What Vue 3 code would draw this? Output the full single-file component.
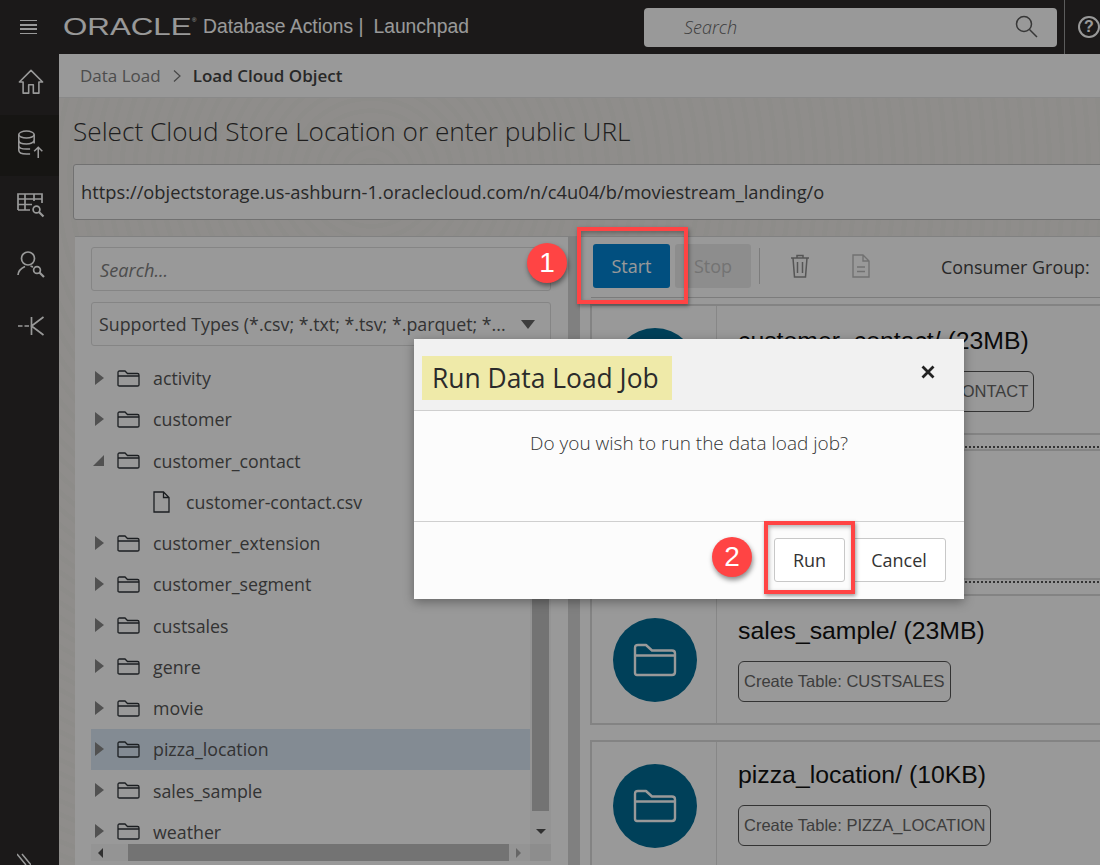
<script setup>
// Tree items on the left side of the load page
const folders = [
  { name: 'activity' },
  { name: 'customer' },
  { name: 'customer_contact', open: true },
  { name: 'customer-contact.csv', file: true },
  { name: 'customer_extension' },
  { name: 'customer_segment' },
  { name: 'custsales' },
  { name: 'genre' },
  { name: 'movie' },
  { name: 'pizza_location', selected: true },
  { name: 'sales_sample' },
  { name: 'weather' }
]

// Cards on the right, the second one sits fully behind the dialog
const cards = [
  { title: 'customer_contact/ (23MB)', tag: 'Create Table: CUSTOMER_CONTACT', cls: 'first' },
  { title: '', tag: '', cls: 'second' },
  { title: 'sales_sample/ (23MB)', tag: 'Create Table: CUSTSALES', cls: 'third' },
  { title: 'pizza_location/ (10KB)', tag: 'Create Table: PIZZA_LOCATION', cls: 'fourth' }
]
</script>

<template>
  <div class="page">
    <header class="topbar">
      <div class="burger"><i></i><i></i><i></i><i></i></div>
      <span class="logo">ORACLE</span>
      <span class="logo-mark">®</span>
      <span class="app-name">Database Actions |</span>
      <span class="app-page">Launchpad</span>
      <div class="global-search">
        <span>Search</span>
        <svg width="26" height="26" viewBox="0 0 26 26" fill="none" stroke="#5c5c5c" stroke-width="1.5">
          <circle cx="11" cy="10" r="7.5" />
          <path d="M16.5 15.5 L24 23" />
        </svg>
      </div>
      <div class="help"><span>?</span></div>
    </header>

    <div class="body">
      <nav class="sidebar">
        <div class="nav-item">
          <svg width="28" height="26" viewBox="0 0 28 28" fill="none" stroke="#fff" stroke-width="1.7">
            <path d="M1.5 14 L14 1.5 L26.5 14 H22.5 V26 H16.5 V17 H11.5 V26 H5.5 V14 Z" stroke-linejoin="round" />
          </svg>
        </div>
        <div class="nav-item active">
          <svg width="28" height="29" viewBox="0 0 30 32" fill="none" stroke="#fff" stroke-width="1.7">
            <ellipse cx="10" cy="5" rx="8.5" ry="3.8" />
            <path d="M1.5 5 V22 C1.5 25 5 26.5 10 26.5 H14 M18.5 5 V15 M1.5 11 C1.5 14 5 15.5 10 15.5 C14 15.5 18.5 14 18.5 11 M1.5 17 C1.5 20 5 21 10 21 H14" />
            <path d="M23 31 V19 M18.5 23.5 L23 19 L27.5 23.5" />
          </svg>
        </div>
        <div class="nav-item">
          <svg width="28" height="28" viewBox="0 0 28 28" fill="none" stroke="#fff" stroke-width="1.7">
            <path d="M1 18 V2 H25 V11 M1 7 H25 M1 12.5 H15 M1 18 H13 M8 2 V18 M17 2 V9" />
            <circle cx="19.5" cy="17.5" r="3.4" />
            <path d="M22 20 L26.5 24.5" stroke-width="2.2" />
          </svg>
        </div>
        <div class="nav-item">
          <svg width="28" height="28" viewBox="0 0 28 28" fill="none" stroke="#fff" stroke-width="1.7">
            <circle cx="11" cy="7.5" r="6.5" />
            <path d="M1 24 C1.5 19 4.5 17 8 15.5 M13.5 15 C14.5 15.3 15.2 15.7 16 16" />
            <circle cx="20" cy="19" r="3.4" />
            <path d="M22.5 21.5 L27 26" stroke-width="2.2" />
          </svg>
        </div>
        <div class="nav-item">
          <svg width="28" height="22" viewBox="0 0 28 22" fill="none" stroke="#fff" stroke-width="1.7">
            <path d="M1 11 H5.5 M7.5 11 H12 M14.5 2 V20 M26.5 2 L14.5 11 L26.5 20" />
          </svg>
        </div>
        <svg class="nav-expand" width="14" height="12" viewBox="0 0 14 12" stroke="#fff" stroke-width="1.5">
          <path d="M0 1 L9 12 M5 1 L14 12" />
        </svg>
      </nav>

      <main class="main">
        <div class="breadcrumb">
          <span class="crumb">Data Load</span>
          <svg width="10" height="14" viewBox="0 0 10 14" fill="none" stroke="#777" stroke-width="1.2">
            <path d="M2 1.5 L8 7 L2 12.5" />
          </svg>
          <strong>Load Cloud Object</strong>
        </div>

        <div class="content">
          <h1>Select Cloud Store Location or enter public URL</h1>
          <div class="url-box">https://objectstorage.us-ashburn-1.oraclecloud.com/n/c4u04/b/moviestream_landing/o</div>

          <div class="panels">
            <section class="left-panel">
              <div class="field search">Search...</div>
              <div class="field select">
                <span>Supported Types (*.csv; *.txt; *.tsv; *.parquet; *...</span>
                <i class="select-arrow"></i>
              </div>

              <div class="tree-box">
                <ul class="tree">
                  <li
                    v-for="item in folders"
                    :key="item.name"
                    :class="{ selected: item.selected, file: item.file }"
                  >
                    <template v-if="!item.file">
                      <i :class="item.open ? 'tw-open' : 'tw-closed'"></i>
                      <svg width="23" height="17" viewBox="0 0 23 17" fill="none" stroke="#2e3338" stroke-width="1.3">
                        <path d="M1 15 V2.5 Q1 1 2.5 1 H8 L10.5 3.5 H20.5 Q22 3.5 22 5 V15 Q22 16 20.5 16 H2.5 Q1 16 1 15 Z M1 6 H22" />
                      </svg>
                    </template>
                    <svg v-else width="17" height="22" viewBox="0 0 17 22" fill="none" stroke="#2e3338" stroke-width="1.3">
                      <path d="M1 1 H10.5 L16 6.5 V21 H1 Z M10.5 1 V6.5 H16" />
                    </svg>
                    <span>{{ item.name }}</span>
                  </li>
                </ul>
                <div class="vscroll">
                  <div class="vthumb"></div>
                  <i class="arrow-down"></i>
                </div>
                <div class="hscroll">
                  <i class="arrow-left"></i>
                  <div class="hthumb"></div>
                  <i class="arrow-right"></i>
                </div>
                <div class="corner"></div>
              </div>
            </section>

            <div class="splitter"></div>

            <section class="right-panel">
              <div class="toolbar">
                <button class="btn-start">Start</button>
                <button class="btn-stop">Stop</button>
                <div class="tool-sep"></div>
                <svg class="trash" width="20" height="24" viewBox="0 0 20 24" fill="none" stroke="#8e8e8e" stroke-width="1.5">
                  <path d="M1 4 H19 M7 4 V1.5 H13 V4 M3 4 L4.5 23 H15.5 L17 4 M7.5 8 V19 M12.5 8 V19" />
                </svg>
                <svg class="doc" width="18" height="24" viewBox="0 0 18 24" fill="none" stroke="#bdbdbd" stroke-width="1.4">
                  <path d="M1 1 H11 L17 7 V23 H1 Z M11 1 V7 H17 M5 13 H13 M5 17.5 H13" />
                </svg>
                <span class="consumer">Consumer Group:</span>
              </div>

              <div class="cards">
                <article v-for="card in cards" :key="card.cls" class="card" :class="card.cls">
                  <div class="card-icon">
                    <div class="circle">
                      <svg width="44" height="34" viewBox="0 0 44 34" fill="none" stroke="#fff" stroke-width="2.4">
                        <path d="M2 30 V5 Q2 2 5 2 H13 L19 7.5 H39 Q42 7.5 42 10.5 V29 Q42 32 39 32 H4 Q2 32 2 30 Z M2 12.5 H42" stroke-linejoin="round" />
                      </svg>
                    </div>
                  </div>
                  <div class="card-text" v-if="card.title">
                    <h2>{{ card.title }}</h2>
                    <span class="tag">{{ card.tag }}</span>
                  </div>
                </article>
              </div>
            </section>
          </div>
        </div>
      </main>
    </div>

    <!-- grey layer the dialog opens over -->
    <div class="overlay"></div>

    <div class="dialog">
      <div class="dialog-head">
        <span class="dialog-title">Run Data Load Job</span>
        <svg width="14" height="14" viewBox="0 0 14 14" stroke="#222" stroke-width="2.8">
          <path d="M1.5 1.5 L12.5 12.5 M12.5 1.5 L1.5 12.5" />
        </svg>
      </div>
      <div class="dialog-body">Do you wish to run the data load job?</div>
      <div class="dialog-foot">
        <button class="btn-plain">Run</button>
        <button class="btn-plain">Cancel</button>
      </div>
    </div>

    <!-- red callouts drawn on top of the screenshot -->
    <div class="mark mark-start"></div>
    <div class="mark mark-run"></div>
    <div class="step step-one">1</div>
    <div class="step step-two">2</div>
  </div>
</template>

<style scoped>
.page {
  position: relative;
  width: 1100px;
  height: 865px;
  overflow: hidden;
  font-family: "Open Sans", "Noto Sans", sans-serif;
  color: #444;
}

.topbar {
  display: flex;
  align-items: center;
  height: 54px;
  background: #2d2b2a;
  color: #fff;
  font-family: "Liberation Sans", Arial, sans-serif;
}

.burger {
  display: flex;
  flex-direction: column;
  gap: 2.7px;
  width: 17px;
  margin-left: 20px;
}

.burger i {
  display: block;
  height: 1.6px;
  background: #fff;
}

.logo {
  display: inline-block;
  margin-left: 26px;
  width: 129px;
  font-size: 23.5px;
  line-height: 24px;
  transform: scaleX(1.33);
  transform-origin: left center;
}

.logo-mark {
  font-size: 6px;
  margin: -14px 0 0 0;
  width: 4px;
}

.app-name {
  margin-left: 7px;
  font-size: 19.3px;
}

.app-page {
  margin-left: 10px;
  font-size: 19.3px;
}

.global-search {
  display: flex;
  align-items: center;
  justify-content: space-between;
  width: 413px;
  height: 39px;
  margin-left: auto;
  padding: 0 18px 0 40px;
  box-sizing: border-box;
  background: #fff;
  border-radius: 4px;
  color: #666;
  font-family: "Open Sans", sans-serif;
  font-style: italic;
  font-weight: 300;
  font-size: 18px;
}

.help {
  display: flex;
  align-items: center;
  height: 54px;
  width: 36px;
  margin-left: 7px;
  padding-left: 13px;
  box-sizing: border-box;
  border-left: 1px solid #999;
  flex-shrink: 0;
}

.help span {
  display: block;
  flex-shrink: 0;
  width: 22px;
  height: 22px;
  box-sizing: border-box;
  border: 2px solid #fff;
  border-radius: 50%;
  font-size: 16px;
  font-weight: bold;
  line-height: 18px;
  text-align: center;
}

.body {
  display: flex;
  height: 811px;
}

.sidebar {
  position: relative;
  width: 59px;
  flex-shrink: 0;
  background: #2d2b2a;
}

.nav-item {
  display: flex;
  align-items: center;
  justify-content: center;
  height: 61px;
  padding-left: 2px;
}

.nav-item.active {
  background: #262320;
}

/* icons do not sit dead centre in their rows */
.nav-item:nth-child(1) svg {
  margin-top: -5px;
}

.nav-item:nth-child(2) svg {
  margin-top: -3px;
}

.nav-item:nth-child(3) svg {
  margin-top: -1px;
}

.nav-item:nth-child(4) svg {
  margin-top: -6px;
}

.nav-item:nth-child(5) svg {
  margin-top: -5px;
}

.nav-expand {
  position: absolute;
  left: 17px;
  bottom: 0;
}

.main {
  flex: 1;
  min-width: 0;
}

.breadcrumb {
  display: flex;
  align-items: center;
  gap: 11px;
  height: 44px;
  padding-left: 21px;
  background: #fff;
  box-sizing: border-box;
  border-bottom: 1px solid #e4e4e4;
  font-size: 17px;
}

.crumb {
  color: #808080;
}

.breadcrumb strong {
  font-weight: 600;
  color: #444;
}

.content {
  height: 767px;
  padding: 15px 0 0 14px;
  box-sizing: border-box;
  background:
    repeating-radial-gradient(ellipse at 30% 10%, rgba(0, 0, 0, 0.012) 0 5px, transparent 5px 13px),
    #eeece8;
  overflow: hidden;
}

h1 {
  margin: 0 0 15px;
  height: 36px;
  font-size: 26.2px;
  line-height: 36px;
  font-weight: 300;
  color: #333;
}

.url-box {
  width: 1100px;
  height: 56px;
  padding-left: 7px;
  box-sizing: border-box;
  border: 1px solid #bdbdbd;
  border-radius: 3px;
  background: #fff;
  font-size: 18.3px;
  line-height: 54px;
  color: #444;
}

.panels {
  display: flex;
  margin: 16px 0 0 2px;
}

.left-panel {
  width: 493px;
  flex-shrink: 0;
  height: 640px;
  padding: 10px 17px 0 16px;
  box-sizing: border-box;
  background: #fff;
  border-top: 1px solid #d8d8d8;
}

.field {
  height: 44px;
  padding-left: 7px;
  box-sizing: border-box;
  border: 1px solid #dedede;
  border-radius: 3px;
  font-size: 17.8px;
  line-height: 44px;
  color: #555;
}

.search {
  padding-left: 8px;
  font-style: italic;
  font-size: 18.2px;
  color: #808080;
}

.select {
  display: flex;
  align-items: center;
  justify-content: space-between;
  margin-top: 11px;
  padding-right: 15px;
  white-space: nowrap;
}

.select-arrow {
  width: 0;
  height: 0;
  border-left: 7px solid transparent;
  border-right: 7px solid transparent;
  border-top: 9px solid #666;
}

.tree-box {
  display: grid;
  grid-template-columns: 439px 21px;
  grid-template-rows: 487px 17px;
  margin-top: 11px;
}

.tree {
  margin: 0;
  padding: 0.5px 0 0;
  list-style: none;
  overflow: hidden;
}

.tree li {
  display: flex;
  align-items: center;
  height: 41.25px;
  padding-left: 26px;
  font-size: 17.8px;
  color: #555;
  position: relative;
}

.tree li svg {
  margin-right: 13px;
}

.tree li.file {
  padding-left: 62px;
}

.tree li.file svg {
  margin-right: 16px;
}

.tree li.selected {
  background: #dae8f5;
}

.tw-closed,
.tw-open {
  position: absolute;
  left: 4px;
  top: 13px;
  width: 0;
  height: 0;
}

.tw-closed {
  border-top: 7px solid transparent;
  border-bottom: 7px solid transparent;
  border-left: 9px solid #888;
}

.tw-open {
  left: 2px;
  top: 15px;
  border-left: 11px solid transparent;
  border-bottom: 11px solid #888;
}

.vscroll {
  position: relative;
  background: #f7f7f7;
}

.vthumb {
  width: 17px;
  height: 429px;
  margin: 25px 0 0 2px;
  background: #c0c0c0;
}

.arrow-down {
  position: absolute;
  left: 6px;
  bottom: 10px;
  border-left: 5px solid transparent;
  border-right: 5px solid transparent;
  border-top: 5px solid #505050;
}

.hscroll {
  display: flex;
  align-items: center;
  background: #f7f7f7;
}

.arrow-left {
  margin-left: 7px;
  border-top: 5px solid transparent;
  border-bottom: 5px solid transparent;
  border-right: 5px solid #505050;
}

.hthumb {
  width: 381px;
  height: 17px;
  margin-left: 25px;
  background: #c0c0c0;
}

.arrow-right {
  margin-left: 7px;
  border-top: 5px solid transparent;
  border-bottom: 5px solid transparent;
  border-left: 5px solid #aaa;
}

.corner {
  background: #ececec;
}

.splitter {
  width: 12px;
  flex-shrink: 0;
  height: 640px;
  background: #d5d5d5;
}

.right-panel {
  width: 600px;
  flex-shrink: 0;
  height: 640px;
  padding-left: 11px;
  background: #fff;
  border-top: 1px solid #d8d8d8;
}

.toolbar {
  display: flex;
  align-items: center;
  height: 61px;
  padding-bottom: 3px;
  padding-left: 2px;
  box-sizing: border-box;
  border-bottom: 1px solid #cfcfcf;
}

button {
  font-family: inherit;
  font-size: 18px;
  border-radius: 3px;
  cursor: pointer;
}

.btn-start,
.btn-stop {
  height: 44px;
  width: 77px;
  border: 0;
}

.btn-start {
  background: #0284d4;
  color: #fff;
}

.btn-stop {
  width: 76px;
  margin-left: 5px;
  background: #ececec;
  color: #c0c0c0;
}

.tool-sep {
  width: 1px;
  height: 36px;
  margin-left: 8px;
  background: #cfcfcf;
}

.trash {
  margin-left: 30px;
}

.doc {
  margin-left: 42px;
}

.consumer {
  margin: 2px 0 0 71px;
  white-space: nowrap;
  font-size: 17.9px;
  color: #444;
}

.cards {
  padding-top: 6px;
}

.card {
  display: flex;
  height: 131px;
  width: 560px;
  box-sizing: border-box;
  margin-left: -1px;
  border: 2px solid #dadada;
}

.card.second {
  position: relative;
  margin-top: 14px;
}

.card.second::before,
.card.second::after {
  content: "";
  position: absolute;
  left: -2px;
  right: -2px;
  border-top: 2px dotted #555;
}

.card.second::before {
  top: -5px;
}

.card.second::after {
  bottom: -5px;
}

.card.third {
  margin-top: 14px;
}

.card.fourth {
  margin-top: 15px;
}

.card.fourth .card-text {
  padding-top: 17px;
}

.card-icon {
  display: flex;
  align-items: center;
  justify-content: center;
  padding-left: 1px;
  width: 123px;
  flex-shrink: 0;
  border-right: 1px solid #e2e2e2;
}

.circle {
  display: flex;
  align-items: center;
  justify-content: center;
  width: 84px;
  height: 84px;
  border-radius: 50%;
  background: #006b94;
}

.card-text {
  padding: 19px 0 0 21px;
  font-family: "Liberation Sans", Arial, sans-serif;
}

h2 {
  margin: 0 0 14px;
  font-size: 24.8px;
  line-height: 32px;
  font-weight: 400;
  color: #111;
  white-space: nowrap;
}

.tag {
  display: inline-block;
  height: 41px;
  padding: 0 5px;
  box-sizing: border-box;
  border: 1px solid #555;
  border-radius: 6px;
  font-size: 16.5px;
  line-height: 39px;
  color: #666;
  white-space: nowrap;
}

.overlay {
  position: absolute;
  inset: 0;
  background: rgba(0, 0, 0, 0.4);
}

.dialog {
  position: absolute;
  left: 414px;
  top: 339px;
  width: 550px;
  height: 260px;
  background: #fcfcfc;
  box-shadow: 0 3px 10px rgba(0, 0, 0, 0.35);
  color: #333;
}

.dialog-head {
  display: flex;
  align-items: center;
  justify-content: space-between;
  height: 72px;
  padding: 0 29px 6px 8px;
  box-sizing: border-box;
  background: #f1f1f1;
  border-bottom: 1px solid #cfcfcf;
}

.dialog-title {
  display: block;
  align-self: flex-start;
  width: 230px;
  height: 44px;
  margin-top: 17px;
  padding: 0 10px;
  background: #efeaa9;
  font-size: 26.4px;
  line-height: 44px;
  color: #2b2b2b;
  white-space: nowrap;
}

.dialog-body {
  height: 110px;
  padding-top: 18px;
  box-sizing: border-box;
  text-align: center;
  font-size: 19px;
  font-weight: 300;
  line-height: 28px;
  color: #333;
}

.dialog-foot {
  display: flex;
  justify-content: flex-end;
  gap: 7px;
  height: 78px;
  padding: 16px 18px 0 0;
  box-sizing: border-box;
  border-top: 1px solid #cfcfcf;
}

.btn-plain {
  height: 44px;
  width: 71px;
  border: 1px solid #c8c8c8;
  background: #fff;
  color: #333;
}

.btn-plain:last-child {
  width: 94px;
}

.mark {
  position: absolute;
  box-sizing: border-box;
  border: 4px solid #ff4444;
  box-shadow: 1px 2px 4px rgba(0, 0, 0, 0.4), inset 1px 2px 4px rgba(0, 0, 0, 0.3);
}

.mark-start {
  left: 577px;
  top: 227px;
  width: 111px;
  height: 77px;
}

.mark-run {
  left: 764px;
  top: 521px;
  width: 91px;
  height: 73px;
}

.step {
  position: absolute;
  width: 40px;
  height: 40px;
  border-radius: 50%;
  background: #ff4444;
  box-shadow: 1px 3px 5px rgba(0, 0, 0, 0.45);
  color: #fff;
  font-family: "Liberation Sans", Arial, sans-serif;
  font-size: 28px;
  line-height: 40px;
  text-align: center;
}

.step-one {
  left: 527px;
  top: 243px;
}

.step-two {
  left: 712px;
  top: 537px;
}
</style>

<style>
html,
body {
  margin: 0;
  background: #fff;
}
</style>
